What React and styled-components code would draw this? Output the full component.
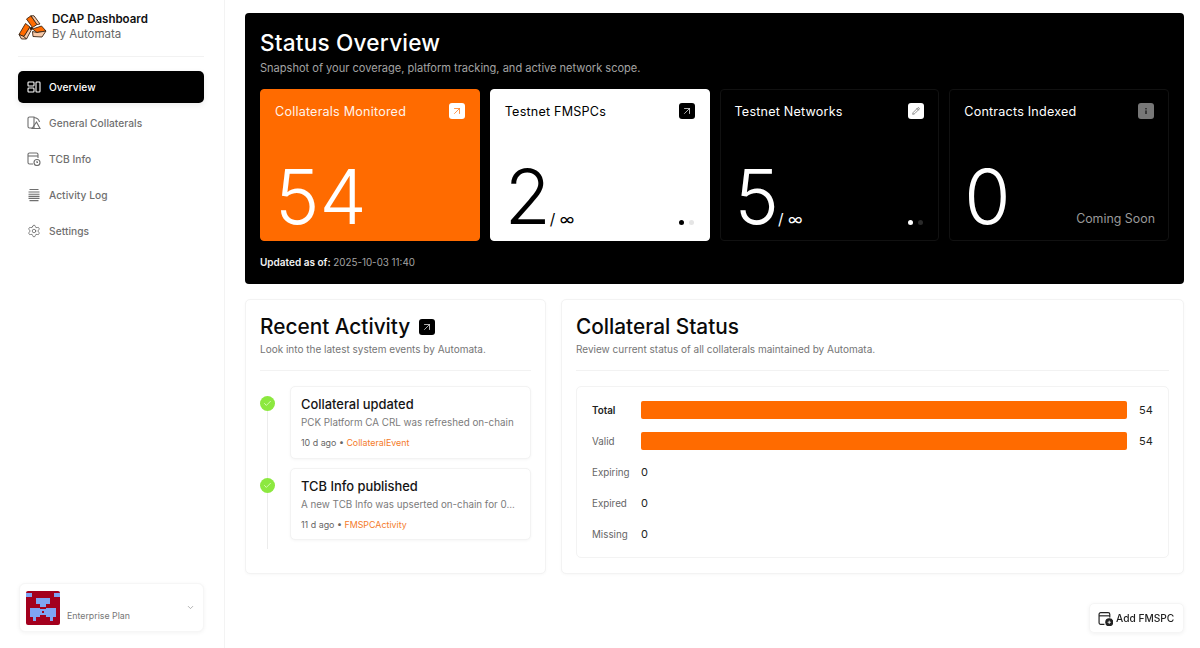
import React from "react";
import styled, { createGlobalStyle } from "styled-components";
import { ArrowUpRight, Check, ChevronDown, Pencil, Settings } from "lucide-react";

const GlobalStyle = createGlobalStyle`
  html, body { margin: 0; padding: 0; height: 100%; background: #fff; }
  body { font-family: Inter, "Liberation Sans", sans-serif; color: #0a0a0a; }
  #root { height: 100%; }
  * { box-sizing: border-box; }
`;

const Shell = styled.div`
  display: flex;
  width: 1200px;
  height: 648px;
  overflow: hidden;
`;

const Sidebar = styled.aside`
  width: 225px;
  flex-shrink: 0;
  display: flex;
  flex-direction: column;
  padding: 9px 20px 16px 18px;
  border-right: 1px solid #f3f3f3;
`;

const Brand = styled.div`
  display: flex;
  align-items: center;
  gap: 5px;
  height: 48px;
  padding-bottom: 11px;
  margin-bottom: 14px;
  border-bottom: 1px solid #f2f2f2;
`;

const BrandText = styled.div`
  display: flex;
  flex-direction: column;
  line-height: 15px;
`;

const BrandName = styled.span`
  font-size: 11.5px;
  font-weight: 600;
  color: #111;
`;

const BrandSub = styled.span`
  font-size: 11.5px;
  color: #666;
`;

const Nav = styled.nav`
  display: flex;
  flex-direction: column;
  gap: 4px;
`;

const NavItem = styled.a`
  display: flex;
  align-items: center;
  gap: 8px;
  height: 32px;
  padding: 0 9px;
  border-radius: 5px;
  font-size: 10.2px;
  font-weight: 500;
  letter-spacing: 0.05px;
  color: ${(p) => (p.$active ? "#fff" : "#6f6f6f")};
  background: ${(p) => (p.$active ? "#000" : "transparent")};
  box-shadow: ${(p) => (p.$active ? "0 2px 6px rgba(0,0,0,.08)" : "none")};
`;

const NavIcon = styled.svg`
  width: 14px;
  height: 14px;
  flex-shrink: 0;
  fill: none;
  stroke: currentColor;
  stroke-width: 1.1;
`;

const PlanCard = styled.div`
  margin-top: auto;
  margin-left: 1px;
  height: 49px;
  display: flex;
  align-items: center;
  padding: 0 8px 0 6px;
  gap: 7px;
  background: #fff;
  border-radius: 6px;
  border: 1px solid #f6f6f6;
  box-shadow: 0 1px 4px rgba(0,0,0,.05);
`;

const PlanLabel = styled.span`
  flex: 1;
  align-self: flex-end;
  margin-bottom: 10px;
  font-size: 8.8px;
  color: #777;
`;

const Main = styled.main`
  flex: 1;
  min-width: 0;
  display: flex;
  flex-direction: column;
  gap: 15px;
  padding: 13px 16px 0 20px;
`;

const Hero = styled.section`
  height: 271px;
  padding: 16px 15px 0;
  background: #000;
  border-radius: 4px;
  color: #fff;
`;

const HeroTitle = styled.h1`
  margin: 0;
  font-size: 22.6px;
  line-height: 28px;
  font-weight: 500;
  letter-spacing: 0.2px;
`;

const HeroSub = styled.p`
  margin: 4px 0 0;
  font-size: 11.05px;
  line-height: 15px;
  color: #a3a3a3;
`;

const StatGrid = styled.div`
  display: grid;
  grid-template-columns: repeat(4, 1fr);
  gap: 10px;
  margin-top: 13px;
`;

const themes = {
  orange: { bg: "#ff6b00", fg: "#fff", chipBg: "#fff", chipFg: "#ff6b00", border: "#ff6b00" },
  light: { bg: "#fff", fg: "#000", chipBg: "#000", chipFg: "#fff", border: "#fff" },
  dark: { bg: "#000", fg: "#fff", chipBg: "#fff", chipFg: "#333", border: "#111" },
  muted: { bg: "#000", fg: "#fff", chipBg: "#777", chipFg: "#222", border: "#111" },
};

const StatCard = styled.div`
  position: relative;
  height: 152px;
  padding: 13px 14px 0;
  border-radius: 4px;
  display: flex;
  flex-direction: column;
  background: ${(p) => themes[p.$tone].bg};
  color: ${(p) => themes[p.$tone].fg};
  border: 1px solid ${(p) => themes[p.$tone].border};
`;

const StatHead = styled.div`
  display: flex;
  justify-content: space-between;
  align-items: center;
  height: 16px;
`;

const StatLabel = styled.span`
  font-size: 12.6px;
  font-weight: 400;
  letter-spacing: 0.2px;
  opacity: ${(p) => (p.$tone === "orange" ? 0.92 : 1)};
`;

const Chip = styled.span`
  width: 16px;
  height: 16px;
  border-radius: 3px;
  display: inline-flex;
  align-items: center;
  justify-content: center;
  background: ${(p) => themes[p.$tone].chipBg};
  color: ${(p) => themes[p.$tone].chipFg};
`;

const StatBody = styled.div`
  display: flex;
  align-items: flex-end;
  margin-top: 43px;
  height: 70px;
`;

const StatValue = styled.span`
  font-size: 75px;
  line-height: 70px;
  font-weight: 300;
`;

const StatSuffix = styled.span`
  margin: 0 0 4px -1px;
  font-size: 15.5px;
  line-height: 16px;
`;

const ComingSoon = styled.span`
  margin: 0 -1px 5px auto;
  font-size: 12.4px;
  line-height: 16px;
  color: #9a9a9a;
`;

const Dots = styled.div`
  position: absolute;
  right: 15px;
  bottom: 15px;
  display: flex;
  gap: 5px;
`;

const Dot = styled.i`
  width: 5px;
  height: 5px;
  border-radius: 50%;
  background: ${(p) => p.$color};
`;

const Updated = styled.p`
  margin: 14px 0 0;
  font-size: 9.8px;
  line-height: 14px;
  color: #a3a3a3;
  b { color: #f2f2f2; font-weight: 600; font-size: 10px; }
`;

const Lower = styled.div`
  display: grid;
  grid-template-columns: 301px 1fr;
  gap: 15px;
`;

const Panel = styled.section`
  height: 275px;
  padding: 15px 14px 0;
  background: #fff;
  border: 1px solid #f3f3f3;
  border-radius: 5px;
  box-shadow: 0 1px 3px rgba(0,0,0,.03);
`;

const PanelTitle = styled.h2`
  display: flex;
  align-items: center;
  gap: 9px;
  margin: 0;
  font-size: 20.8px;
  line-height: 24px;
  font-weight: 500;
`;

const PanelSub = styled.p`
  margin: 4px 0 0;
  padding-bottom: 14px;
  font-size: 10px;
  line-height: 13px;
  color: #757575;
  border-bottom: 1px solid #f2f2f2;
`;

const Timeline = styled.div`
  position: relative;
  display: flex;
  flex-direction: column;
  gap: 9px;
  margin-top: 15px;
  padding-left: 30px;
  &::before {
    content: "";
    position: absolute;
    left: 7px;
    top: 14px;
    bottom: -9px;
    width: 1px;
    background: #ececec;
  }
`;

const EventCard = styled.div`
  position: relative;
  height: 72.5px;
  padding: 10px 10px 0;
  background: #fff;
  border: 1px solid #f3f3f3;
  border-radius: 5px;
  box-shadow: 0 1px 3px rgba(0,0,0,.04);
`;

const EventDot = styled.span`
  position: absolute;
  left: -31px;
  top: 9px;
  width: 15px;
  height: 15px;
  border-radius: 50%;
  background: #8ce83f;
  color: #e8ffd4;
  display: flex;
  align-items: center;
  justify-content: center;
`;

const EventTitle = styled.div`
  font-size: 12.9px;
  line-height: 15px;
  font-weight: 500;
  color: #151515;
`;

const EventText = styled.div`
  margin-top: 4px;
  font-size: 9.8px;
  line-height: 14px;
  color: #7b7b7b;
  white-space: nowrap;
`;

const EventMeta = styled.div`
  margin-top: 7px;
  font-size: 8.9px;
  line-height: 12px;
  color: #666;
  em { font-style: normal; color: #f47b2a; }
`;

const ChartCard = styled.div`
  display: flex;
  flex-direction: column;
  height: 172px;
  margin-top: 15px;
  padding: 14px 15px 0;
  border: 1px solid #f3f3f3;
  border-radius: 5px;
`;

const ChartRow = styled.div`
  display: grid;
  grid-template-columns: 49px 1fr;
  align-items: center;
  height: 18px;
  margin-bottom: 13px;
  font-size: 9.8px;
  color: #666;
`;

const RowLabel = styled.span`
  font-weight: ${(p) => (p.$strong ? 600 : 400)};
  color: ${(p) => (p.$strong ? "#222" : "#666")};
`;

const RowTrack = styled.div`
  display: flex;
  align-items: center;
  gap: 12px;
`;

const Bar = styled.div`
  flex: 1;
  height: 18px;
  background: #ff6b00;
  border-radius: 2px;
`;

const RowValue = styled.span`
  font-size: 11px;
  color: #222;
  min-width: ${(p) => (p.$wide ? "14px" : "0")};
`;

const AddButton = styled.button`
  position: fixed;
  right: 16px;
  bottom: 15px;
  display: flex;
  align-items: center;
  gap: 3px;
  width: 95px;
  height: 30px;
  padding: 0 0 0 8px;
  font: 500 10.2px Inter, "Liberation Sans", sans-serif;
  color: #222;
  background: #fff;
  border: 1px solid #f5f5f5;
  border-radius: 5px;
  box-shadow: 0 1px 4px rgba(0,0,0,.06);
`;

const Logo = () => (
  <svg width="29" height="25" viewBox="0 0 29 25" style={{ flexShrink: 0 }}>
    <g stroke="#3a2412" strokeWidth="0.9" strokeLinejoin="round">
      <path d="M8.5 4 13 .8 19 9.5 14.5 12.5z" fill="#ff6b00" />
      <path d="M13 .8 16 .8 22 9 19 9.5z" fill="#f7c9a8" />
      <path d="M1 19.5 7.5 8.5 12 12 6 21.5z" fill="#ff6b00" />
      <path d="M1 19.5 6 21.5 8.5 24 3.5 24z" fill="#f7c9a8" />
      <path d="M6 21.5 12 12 13 15.5 8.5 24z" fill="#f7c9a8" />
      <path d="M14.5 14 23.5 11 28 16 19 17.5z" fill="#ff6b00" />
      <path d="M14.5 16.5 19 17.5 28 16 24 22 15 21.5z" fill="#f7c9a8" />
    </g>
    <circle cx="13.5" cy="13.5" r="1.4" fill="#2a1608" />
  </svg>
);

const GridIcon = () => (
  <NavIcon viewBox="0 0 14 14">
    <rect x="1" y="2" width="6" height="4" rx=".8" />
    <rect x="1" y="8" width="6" height="4" rx=".8" />
    <rect x="9" y="2" width="4" height="10" rx=".8" />
  </NavIcon>
);

const ShapesIcon = () => (
  <NavIcon viewBox="0 0 14 14">
    <path d="M7 12H2.5A1.5 1.5 0 0 1 1 10.5v-8A1.5 1.5 0 0 1 2.5 1H7z" />
    <path d="M7 1.5c3 .3 5 2 5.5 4.5" />
    <path d="M5 12.5 9.5 6l3.5 6.5z" />
  </NavIcon>
);

const CalendarClockIcon = () => (
  <NavIcon viewBox="0 0 14 14">
    <path d="M6 12H2.5A1.5 1.5 0 0 1 1 10.5v-8A1.5 1.5 0 0 1 2.5 1h7A1.5 1.5 0 0 1 11 2.5V6" />
    <path d="M1 4h10" />
    <circle cx="10" cy="10.5" r="3" />
    <path d="M10 9v1.5h1" />
  </NavIcon>
);

const StackIcon = () => (
  <NavIcon viewBox="0 0 14 14">
    <path d="M2.5 1.5h9M1.5 4h11M1.5 6.2h11M1.5 8.4h11M1.5 10.4h11M2.5 12.6h9" />
  </NavIcon>
);

const AddIcon = () => (
  <svg width="15" height="15" viewBox="0 0 14 14" fill="none" stroke="#222" strokeWidth="1.1">
    <path d="M6 12.5H2.5A1.5 1.5 0 0 1 1 11V3a1.5 1.5 0 0 1 1.5-1.5h7A1.5 1.5 0 0 1 11 3v3" />
    <path d="M1 4.5h10" />
    <circle cx="10.5" cy="10.5" r="3.2" fill="#222" />
    <path d="M10.5 9v3M9 10.5h3" stroke="#fff" strokeWidth=".8" />
  </svg>
);

const InfoMark = () => (
  <svg width="8" height="8" viewBox="0 0 8 8" fill="#2a2a2a">
    <rect x="3.2" y="1" width="1.6" height="1.4" />
    <rect x="3.2" y="3.4" width="1.6" height="3.6" />
  </svg>
);

// avatar pixels on a 17x17 grid
const avatarPixels = [
  [0, 1, 3, 2], [14, 1, 3, 2],
  [5, 3.5, 7, 3], [7, 6.5, 3, 1.5],
  [2, 8.5, 5, 4.5], [10, 8.5, 5, 4.5],
  [7, 9, 1, 3], [9, 9, 1, 3], [8, 9, 1, 1], [8, 11, 1, 1],
  [3.5, 13, 1.5, 2], [12, 13, 1.5, 2],
];

const Avatar = () => (
  <svg width="34" height="34" viewBox="0 0 17 17" style={{ borderRadius: 2, flexShrink: 0 }}>
    <rect width="17" height="17" fill="#a3001e" />
    {avatarPixels.map(([x, y, w, h]) => (
      <rect key={`${x}-${y}`} x={x} y={y} width={w} height={h} fill="#7fa4f4" />
    ))}
  </svg>
);

const navItems = [
  { label: "Overview", icon: <GridIcon />, active: true },
  { label: "General Collaterals", icon: <ShapesIcon /> },
  { label: "TCB Info", icon: <CalendarClockIcon /> },
  { label: "Activity Log", icon: <StackIcon /> },
  { label: "Settings", icon: <Settings size={14} strokeWidth={1.2} color="#555" /> },
];

const stats = [
  { label: "Collaterals Monitored", value: "54", tone: "orange", chip: <ArrowUpRight size={12} strokeWidth={1.4} /> },
  { label: "Testnet FMSPCs", value: "2", tone: "light", chip: <ArrowUpRight size={12} strokeWidth={1.4} />, suffix: "/ ∞", dots: ["#000", "#e5e5e5"] },
  { label: "Testnet Networks", value: "5", tone: "dark", chip: <Pencil size={8} strokeWidth={1.6} />, suffix: "/ ∞", dots: ["#fff", "#2a2a2a"] },
  { label: "Contracts Indexed", value: "0", tone: "muted", chip: <InfoMark />, coming: true },
];

const events = [
  { title: "Collateral updated", text: "PCK Platform CA CRL was refreshed on-chain", age: "10 d ago", tag: "CollateralEvent" },
  { title: "TCB Info published", text: "A new TCB Info was upserted on-chain for 0...", age: "11 d ago", tag: "FMSPCActivity" },
];

const rows = [
  { label: "Total", value: 54, strong: true },
  { label: "Valid", value: 54 },
  { label: "Expiring", value: 0 },
  { label: "Expired", value: 0 },
  { label: "Missing", value: 0 },
];

export default function App() {
  return (
    <Shell>
      <GlobalStyle />
      <Sidebar>
        <Brand>
          <Logo />
          <BrandText>
            <BrandName>DCAP Dashboard</BrandName>
            <BrandSub>By Automata</BrandSub>
          </BrandText>
        </Brand>
        <Nav>
          {navItems.map((item) => (
            <NavItem key={item.label} $active={item.active}>
              {item.icon}
              {item.label}
            </NavItem>
          ))}
        </Nav>
        <PlanCard>
          <Avatar />
          <PlanLabel>Enterprise Plan</PlanLabel>
          <ChevronDown size={9} color="#999" />
        </PlanCard>
      </Sidebar>
      <Main>
        <Hero>
          <HeroTitle>Status Overview</HeroTitle>
          <HeroSub>Snapshot of your coverage, platform tracking, and active network scope.</HeroSub>
          <StatGrid>
            {stats.map((s) => (
              <StatCard key={s.label} $tone={s.tone}>
                <StatHead>
                  <StatLabel $tone={s.tone}>{s.label}</StatLabel>
                  <Chip $tone={s.tone}>{s.chip}</Chip>
                </StatHead>
                <StatBody>
                  <StatValue>{s.value}</StatValue>
                  {s.suffix && <StatSuffix>{s.suffix}</StatSuffix>}
                  {s.coming && <ComingSoon>Coming Soon</ComingSoon>}
                </StatBody>
                {s.dots && (
                  <Dots>
                    {s.dots.map((c, i) => (
                      <Dot key={i} $color={c} />
                    ))}
                  </Dots>
                )}
              </StatCard>
            ))}
          </StatGrid>
          <Updated>
            <b>Updated as of:</b> 2025-10-03 11:40
          </Updated>
        </Hero>
        <Lower>
          <Panel>
            <PanelTitle>
              Recent Activity
              <Chip $tone="light">
                <ArrowUpRight size={12} strokeWidth={1.4} />
              </Chip>
            </PanelTitle>
            <PanelSub>Look into the latest system events by Automata.</PanelSub>
            <Timeline>
              {events.map((e) => (
                <EventCard key={e.title}>
                  <EventDot>
                    <Check size={9} strokeWidth={2} />
                  </EventDot>
                  <EventTitle>{e.title}</EventTitle>
                  <EventText>{e.text}</EventText>
                  <EventMeta>
                    {e.age} • <em>{e.tag}</em>
                  </EventMeta>
                </EventCard>
              ))}
            </Timeline>
          </Panel>
          <Panel>
            <PanelTitle>Collateral Status</PanelTitle>
            <PanelSub>Review current status of all collaterals maintained by Automata.</PanelSub>
            <ChartCard>
              {rows.map((r) => (
                <ChartRow key={r.label}>
                  <RowLabel $strong={r.strong}>{r.label}</RowLabel>
                  <RowTrack>
                    {r.value > 0 && <Bar />}
                    <RowValue $wide={r.value > 0}>{r.value}</RowValue>
                  </RowTrack>
                </ChartRow>
              ))}
            </ChartCard>
          </Panel>
        </Lower>
      </Main>
      <AddButton>
        <AddIcon />
        Add FMSPC
      </AddButton>
    </Shell>
  );
}
